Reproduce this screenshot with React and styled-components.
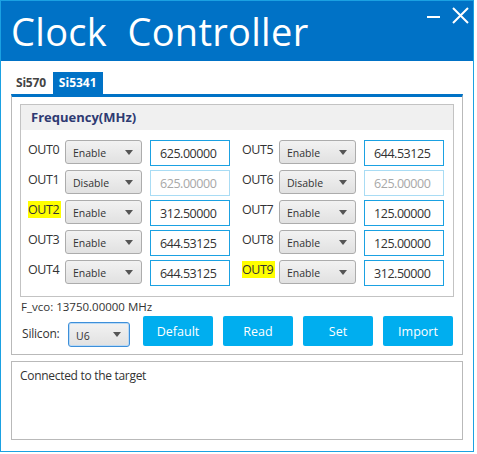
import React from 'react'
import styled, { createGlobalStyle } from 'styled-components'

const rows = [
  [
    { name: 'OUT0', mode: 'Enable', freq: '625.00000' },
    { name: 'OUT5', mode: 'Enable', freq: '644.53125' },
  ],
  [
    { name: 'OUT1', mode: 'Disable', freq: '625.00000' },
    { name: 'OUT6', mode: 'Disable', freq: '625.00000' },
  ],
  [
    { name: 'OUT2', mode: 'Enable', freq: '312.50000', mark: true },
    { name: 'OUT7', mode: 'Enable', freq: '125.00000' },
  ],
  [
    { name: 'OUT3', mode: 'Enable', freq: '644.53125' },
    { name: 'OUT8', mode: 'Enable', freq: '125.00000' },
  ],
  [
    { name: 'OUT4', mode: 'Enable', freq: '644.53125' },
    { name: 'OUT9', mode: 'Enable', freq: '312.50000', mark: true },
  ],
]

const Arrow = () => (
  <svg width="8" height="5" viewBox="0 0 8 5">
    <path d="M0 0 H8 L4 5 Z" fill="#555" />
  </svg>
)

const Combo = ({ value, focused }) => (
  <SelectBox focused={focused}>
    <span>{value}</span>
    <Arrow />
  </SelectBox>
)

const App = () => {
  return (
    <>
      <GlobalStyle />
      <Window>
        <TitleBar>
          <Title>Clock&nbsp; Controller</Title>
          <Controls>
            <svg width="13" height="4" viewBox="0 0 13 4">
              <path d="M0 2 H13" stroke="#fff" strokeWidth="2" />
            </svg>
            <svg width="17" height="17" viewBox="0 0 17 17">
              <path d="M1 1 L16 16 M16 1 L1 16" stroke="#fff" strokeWidth="2" />
            </svg>
          </Controls>
        </TitleBar>
        <Content>
          <TabStrip>
            <Tab>Si570</Tab>
            <Tab active>Si5341</Tab>
          </TabStrip>
          <TabPage>
            <Group>
              <GroupHeader>Frequency(MHz)</GroupHeader>
              <OutGrid>
                {rows.flat().map((o) => {
                  const off = o.mode === 'Disable'
                  return (
                    <OutCell key={o.name}>
                      <OutLabel>
                        <Name mark={o.mark}>{o.name}</Name>
                      </OutLabel>
                      <Combo value={o.mode} />
                      <FreqInput disabled={off}>{o.freq}</FreqInput>
                    </OutCell>
                  )
                })}
              </OutGrid>
            </Group>
            <Vco>F_vco: 13750.00000 MHz</Vco>
            <Footer>
              <SiliconLabel>Silicon:</SiliconLabel>
              <SiliconSelect>
                <Combo value="U6" focused />
              </SiliconSelect>
              <Buttons>
                <Button>Default</Button>
                <Button>Read</Button>
                <Button>Set</Button>
                <Button>Import</Button>
              </Buttons>
            </Footer>
          </TabPage>
          <LogBox>Connected to the target</LogBox>
        </Content>
      </Window>
    </>
  )
}

const GlobalStyle = createGlobalStyle`
  body {
    margin: 0;
    background: #fff;
    font-family: 'Open Sans', 'Noto Sans', sans-serif;
    color: #333;
  }
`
const Window = styled.div`
  width: 472px;
  height: 450px;
  border: 1px solid #1ba1e2;
  background: #fff;
  display: flex;
  flex-direction: column;
`
const TitleBar = styled.div`
  height: 60px;
  background: #0072c6;
  display: flex;
  justify-content: space-between;
  align-items: flex-start;
`
const Title = styled.div`
  color: #fff;
  font-size: 38px;
  line-height: 60px;
  padding-left: 10px;
  letter-spacing: 0.3px;
`
const Controls = styled.div`
  display: flex;
  align-items: center;
  gap: 12px;
  padding: 6px 4px 0 0;
  svg:first-child {
    margin-top: 2px;
  }
`
const Content = styled.div`
  padding: 11px 10px 0 10px;
`
const TabStrip = styled.div`
  display: flex;
  gap: 2px;
  height: 22px;
`
const Tab = styled.div`
  padding: ${(p) => (p.active ? '0 6px' : '0 5px')};
  font-size: 12px;
  font-weight: 700;
  line-height: 22px;
  letter-spacing: ${(p) => (p.active ? '0' : '-0.2px')};
  color: ${(p) => (p.active ? '#fff' : '#444')};
  background: ${(p) => (p.active ? '#0072c6' : 'transparent')};
`
const TabPage = styled.div`
  height: 250px;
  border: 1px solid #b9b9b9;
  border-top: 3px solid #0072c6;
  padding: 7px 8px 0 8px;
`
const Group = styled.div`
  border: 1px solid #c3c3c3;
  height: 191px;
`
const GroupHeader = styled.div`
  height: 25px;
  background: #f0f0f0;
  padding-left: 10px;
  font-size: 13px;
  font-weight: 700;
  line-height: 25px;
  color: #2e3a72;
`
const OutGrid = styled.div`
  display: grid;
  grid-template-columns: 202px 203px;
  column-gap: 12px;
  row-gap: 4px;
  padding: 10px 0 0 7px;
`
const OutCell = styled.div`
  display: flex;
  align-items: flex-start;
`
const OutLabel = styled.div`
  width: 37px;
  flex: none;
  font-size: 12.5px;
  line-height: 18px;
  letter-spacing: -0.4px;
  padding-top: 1px;
`
const Name = styled.span`
  background: ${(p) => (p.mark ? '#ffff00' : 'transparent')};
  padding-right: ${(p) => (p.mark ? '2px' : '0')};
`
const SelectBox = styled.div`
  width: 77px;
  height: 24px;
  box-sizing: border-box;
  flex: none;
  display: flex;
  align-items: center;
  justify-content: space-between;
  padding: 0 8px 0 7px;
  border: 1px solid ${(p) => (p.focused ? '#3d8fd9' : '#acacac')};
  border-radius: 3px;
  background: linear-gradient(#f2f2f2, #e1e1e1);
  font-size: 10.5px;
  color: #333;
  box-shadow: ${(p) => (p.focused ? 'inset 0 0 0 1px #b9d9f5' : 'none')};
  span {
    padding-top: 2px;
  }
`
const FreqInput = styled.div`
  margin-left: 8px;
  width: 80px;
  height: 26px;
  box-sizing: border-box;
  border: 1px solid ${(p) => (p.disabled ? '#a9dcf4' : '#1ba1e2')};
  padding-left: 9px;
  font-size: 12.5px;
  letter-spacing: -0.45px;
  line-height: 25px;
  color: ${(p) => (p.disabled ? '#a8a8a8' : '#333')};
`
const Vco = styled.div`
  font-size: 11.5px;
  line-height: 16px;
  padding: 2px 0 0 1px;
`
const Footer = styled.div`
  display: flex;
  align-items: flex-start;
  margin-top: 1px;
`
const SiliconLabel = styled.div`
  width: 46px;
  padding: 9px 0 0 2px;
  font-size: 12px;
  letter-spacing: -0.2px;
`
const SiliconSelect = styled.div`
  padding-top: 6px;
  & > div {
    width: 62px;
    height: 25px;
  }
`
const Buttons = styled.div`
  display: flex;
  gap: 10px;
  margin-left: 13px;
`
const Button = styled.button`
  width: 70px;
  height: 30px;
  border: none;
  border-radius: 2px;
  background: #00aeef;
  color: #fff;
  font-family: inherit;
  font-size: 12.5px;
  padding: 0;
`
const LogBox = styled.div`
  margin-top: 6px;
  height: 79px;
  border: 1px solid #b9b9b9;
  padding: 5px 8px;
  box-sizing: border-box;
  font-size: 12px;
  letter-spacing: -0.3px;
`

export default App
